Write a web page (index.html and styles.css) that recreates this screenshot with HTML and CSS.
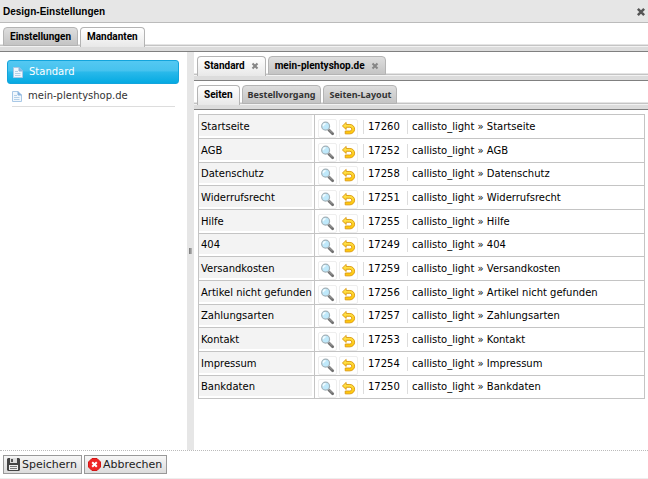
FILE: index.html
```html
<!DOCTYPE html>
<html lang="de">
<head>
<meta charset="utf-8">
<title>Design-Einstellungen</title>
<link rel="stylesheet" href="styles.css">
<script src="pages.js" defer></script>
</head>
<body>
<svg class="sprites" aria-hidden="true">
  <defs>
    <linearGradient id="gold" x1="0" y1="0" x2="0" y2="1"><stop offset="0" stop-color="#ffe95a"/><stop offset="1" stop-color="#ffc400"/></linearGradient>
    <symbol id="search" viewBox="0 0 16 16">
      <path d="M9.500 9.500l4 4" stroke="#707070" stroke-width="3" stroke-linecap="round"/>
      <path d="M9 8.500l4 4" stroke="#aaa" stroke-width="1"/>
      <circle cx="6" cy="5.500" r="4.200" fill="#bfe9fb" stroke="#a3b1b8" stroke-width="1.300"/>
      <path d="M3.500 5.500a2.500 2.500 0 0 1 2.500-2.500" stroke="#f2fcff" stroke-width="1.500" fill="none"/>
    </symbol>
    <symbol id="undo" viewBox="0 0 16 16">
      <path d="M1.500 5.300L5.500 1.500v2.200H9.500a5 5 0 0 1 0 10H4.500v-3h5a2 2 0 0 0 0-4h-4V9z" fill="url(#gold)" stroke="#dc9a10" stroke-width="1" stroke-linejoin="round"/>
    </symbol>
    <symbol id="page" viewBox="0 0 10 11">
      <path d="M.5.5h5.500l3.500 3.500v6.500h-9z" fill="#f1f7fc" stroke="#a9c8e6"/>
      <path d="M6 .5V4h3.500" fill="#8ab4de" stroke="#8ab4de"/>
      <path d="M2 4.500h3M2 6.500h5.500M2 8.500h5.500" stroke="#b5d0e8"/>
    </symbol>
  </defs>
</svg>
<div class="window">
  <header class="titlebar">
    <h1>Design-Einstellungen</h1>
    <button class="close" type="button" aria-label="Schließen"><svg viewBox="0 0 8 8"><path d="M1.500 1.500l5 5M6.500 1.500l-5 5"/></svg></button>
  </header>
  <nav class="tabs">
    <button type="button" class="tab">Einstellungen</button>
    <button type="button" class="tab active">Mandanten</button>
  </nav>
  <main class="split">
    <nav class="clients">
      <a href="#standard" class="client selected"><svg><use href="#page"/></svg>Standard</a>
      <a href="#shop" class="client"><svg><use href="#page"/></svg>mein-plentyshop.de</a>
    </nav>
    <div class="splitter"><span></span></div>
    <section class="detail">
      <nav class="tabs">
        <button type="button" class="tab active">Standard<svg viewBox="0 0 8 8"><path d="M1.500 1.500l5 5M6.500 1.500l-5 5"/></svg></button>
        <button type="button" class="tab">mein-plentyshop.de<svg viewBox="0 0 8 8"><path d="M1.500 1.500l5 5M6.500 1.500l-5 5"/></svg></button>
      </nav>
      <nav class="tabs">
        <button type="button" class="tab active">Seiten</button>
        <button type="button" class="tab small">Bestellvorgang</button>
        <button type="button" class="tab small">Seiten-Layout</button>
      </nav>
      <div class="pages">
        <table><tbody id="rows"></tbody></table>
      </div>
    </section>
  </main>
  <footer class="actions">
    <button type="button" class="action"><svg viewBox="0 0 13 13"><path d="M0 1l1-1h11l1 1v11l-1 1H1l-1-1z" fill="#444"/><path d="M3 0h7v5H3z" fill="#ddd"/><path d="M4 1h2v3H4z" fill="#555"/><path d="M2 7h9v5H2z" fill="#eee"/><path d="M3 8.500h7M3 10.500h7" stroke="#777"/></svg>Speichern</button>
    <button type="button" class="action"><svg viewBox="0 0 13 13"><path d="M4 .5h5L12.500 4v5L9 12.500H4L.5 9V4z" fill="#ee2424" stroke="#d41616"/><path d="M4.200 4.200l4.600 4.600M8.800 4.200L4.200 8.800" stroke="#fff" stroke-width="2"/></svg>Abbrechen</button>
  </footer>
</div>
</body>
</html>
```
FILE: styles.css
```css
* { box-sizing: border-box; }
body {
  margin: 0;
  background: #fff;
  color: #000;
  font: 10px/14px Verdana, "DejaVu Sans", sans-serif;
}
button { font: inherit; color: inherit; margin: 0; }
.sprites { position: absolute; width: 0; height: 0; }
.window { display: flex; flex-direction: column; height: 100vh; }
.titlebar {
  display: flex;
  align-items: center;
  justify-content: space-between;
  height: 23px;
  padding: 1px 2px 0 3px;
  background: #e6e6e6;
  border-bottom: 1px solid #bbb;
}
h1 { margin: 0; font: bold 10px/14px "Liberation Sans", Arial, sans-serif; }
.close { width: 10px; height: 10px; padding: 0; border: 0; background: none; }
.close svg { display: block; width: 10px; height: 10px; stroke: #555; stroke-width: 2; }
.tabs {
  display: flex;
  align-items: flex-start;
  gap: 2px;
  height: 29px;
  padding: 4px 3px 0;
  background: linear-gradient(#fff 21px, #e4e4e4 21px 22px, #c4c4c4 22px 23px, #f2f2f2 23px 24px, #dcdcdc 24px);
  border-bottom: 1px solid #808080;
}
.tab {
  display: flex;
  align-items: center;
  gap: 6px;
  height: 19px;
  padding: 0 6px;
  border: 1px solid #b4b4b4;
  border-radius: 4px 4px 0 0;
  background: linear-gradient(#dedede, #c4c4c4);
  font: bold 10px/14px Roboto, Arial, sans-serif;
  white-space: nowrap;
}
.tab.active { height: 20px; padding-bottom: 2px; background: linear-gradient(#fff, #e8e8e8); border-bottom: 0; }
.tab.small { padding: 0 5px; font: bold 9px/14px "Noto Sans", sans-serif; color: #333; }
.tab svg { width: 8px; height: 8px; stroke: #858585; stroke-width: 2; }
.split { display: flex; flex: 1; min-height: 0; }
.clients { width: 187px; flex: none; padding: 8px 8px 0 7px; }
.client {
  display: flex;
  align-items: center;
  gap: 6px;
  height: 23px;
  margin: 0 4px 0 5px;
  padding-top: 2px;
  border-bottom: 1px solid #ddd;
  color: #333;
  text-decoration: none;
}
.client svg { width: 10px; height: 11px; }
.client.selected {
  height: 24px;
  margin: 0;
  padding: 0 5px;
  border: 1px solid #13a4dc;
  border-radius: 3px;
  background: linear-gradient(#54c8f2, #45c2ee 45%, #2ab9ea 50%, #05aae2);
  color: #fff;
}
.splitter { display: flex; align-items: center; justify-content: center; width: 7px; flex: none; background: #e6e6e6; }
.splitter span { width: 3px; height: 6px; background: linear-gradient(90deg, #777, #bbb); }
.detail { flex: 1; min-width: 0; }
.pages { padding: 4px 3px 0 4px; }
table { width: 100%; border-collapse: collapse; border: 1px solid #c4c4c4; }
tr { height: 24px; }
tr:nth-child(3n) { height: 23px; }
th, td { padding: 0; border: 1px solid #c4c4c4; text-align: left; font-weight: normal; white-space: nowrap; }
th { width: 116px; padding-left: 2px; background: #f3f3f3; box-shadow: inset -2px -2px #fff; }
.row { display: flex; align-items: center; height: 22px; padding-left: 3px; }
tr:nth-child(3n) .row { height: 21px; }
.tool { display: flex; align-self: flex-end; align-items: center; justify-content: center; width: 19px; height: 19px; margin-right: 2px; padding: 0; border: 1px solid #eee; border-radius: 2px; background: #fff; }
.tool svg { width: 15px; height: 15px; }
.number, .path { margin-left: 3px; padding-left: 4px; border-left: 1px solid #ddd; }
.number { width: 41px; }
.actions { display: flex; align-items: flex-start; gap: 2px; height: 29px; padding: 4px 3px 0; border-top: 1px dotted #bbb; border-bottom: 1px solid #eee; }
.action {
  display: flex;
  align-items: center;
  gap: 2px;
  height: 19px;
  padding: 0 4px 0 3px;
  border: 1px solid #999;
  background: linear-gradient(#f6f6f6, #dcdcdc);
  color: #222;
  font-size: 11px;
}
.action svg { width: 13px; height: 13px; }
```
FILE: pages.js
```js
const pages = [
  ["Startseite", 17260], ["AGB", 17252], ["Datenschutz", 17258],
  ["Widerrufsrecht", 17251], ["Hilfe", 17255], ["404", 17249],
  ["Versandkosten", 17259], ["Artikel nicht gefunden", 17256],
  ["Zahlungsarten", 17257], ["Kontakt", 17253],
  ["Impressum", 17254], ["Bankdaten", 17250]
];

document.getElementById("rows").innerHTML = pages.map(([name, id]) => `
  <tr>
    <th scope="row">${name}</th>
    <td><div class="row">
      <button type="button" class="tool" aria-label="Suchen"><svg><use href="#search"/></svg></button>
      <button type="button" class="tool" aria-label="Zurücksetzen"><svg><use href="#undo"/></svg></button>
      <span class="number">${id}</span>
      <span class="path">callisto_light » ${name}</span>
    </div></td>
  </tr>`).join("");
```
